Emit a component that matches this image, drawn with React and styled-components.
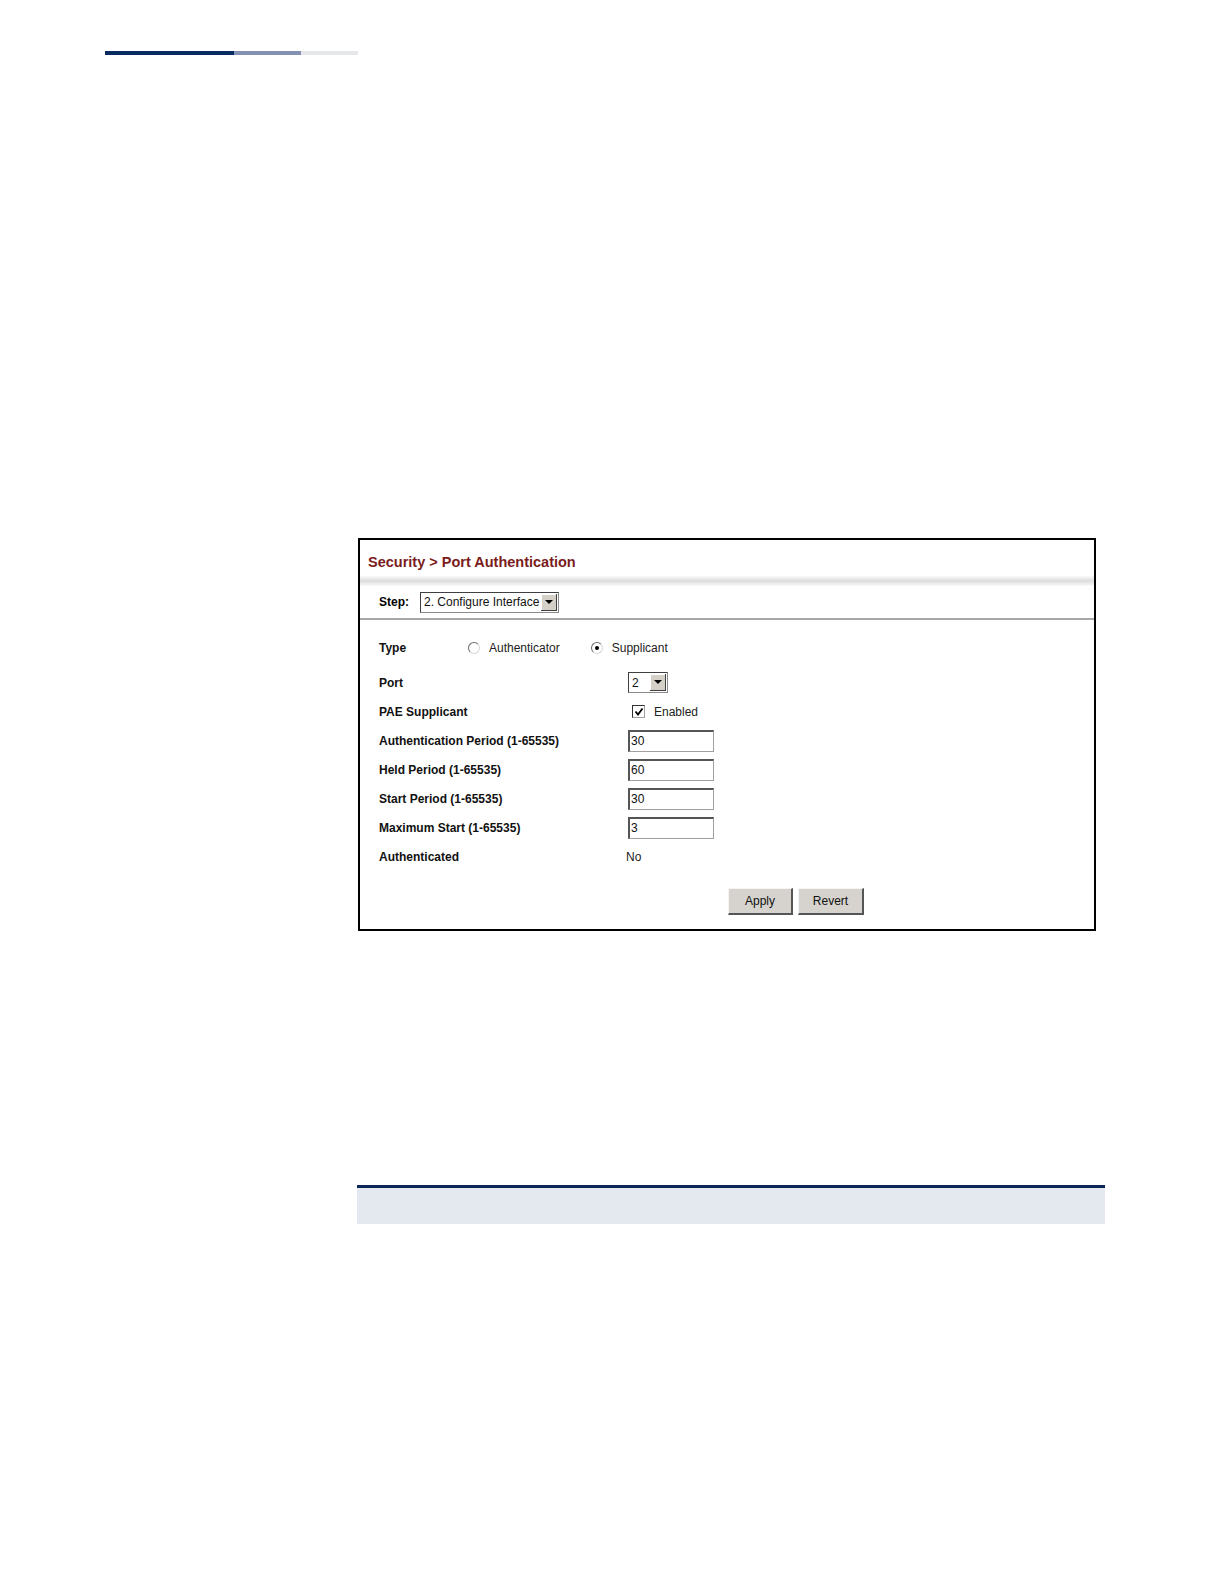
import React from "react";
import styled, { createGlobalStyle } from "styled-components";

const GlobalStyle = createGlobalStyle`
  html, body {
    margin: 0;
    background: #ffffff;
    font-family: "Liberation Sans", Arial, sans-serif;
  }
`;

const Page = styled.div`
  padding-top: 51px;
`;

const HeaderBar = styled.div`
  display: flex;
  margin-left: 105px;
  height: 4px;
`;

const BarSegment = styled.div`
  width: ${props => props.w}px;
  background: ${props => props.color};
`;

const Panel = styled.div`
  margin: 483px 0 0 358px;
  width: 738px;
  height: 393px;
  box-sizing: border-box;
  border: 2px solid #000;
  display: flex;
  flex-direction: column;
`;

const TitleRow = styled.div`
  height: 36px;
  padding: 8px 0 0 8px;
  box-sizing: border-box;
  line-height: 28px;
  color: #7b1c1c;
  font-size: 14.5px;
  font-weight: bold;
`;

const Band = styled.div`
  height: 10px;
  background: linear-gradient(#fbfbfb, #dcdcdc 50%, #fbfbfb);
`;

const StepRow = styled.div`
  height: 34px;
  display: flex;
  align-items: center;
  padding-left: 19px;
  gap: 11px;
  box-sizing: border-box;
  border-bottom: 2px solid #a8a8a8;
  font-size: 12px;
  font-weight: bold;
`;

const Select = styled.div`
  display: flex;
  align-items: stretch;
  height: 21px;
  width: ${props => props.w}px;
  box-sizing: border-box;
  border: 1px solid #8a8a8a;
  border-top-color: #404040;
  border-left-color: #404040;
  background: #fff;
  font-size: 12px;
  font-weight: normal;
  color: #111;
`;

const SelectText = styled.span`
  flex: 1;
  padding-left: 3px;
  display: flex;
  align-items: center;
  white-space: nowrap;
`;

const SelectArrow = styled.span`
  width: 15px;
  margin: 1px;
  background: #d4d0c8;
  border-right: 1px solid #404040;
  border-bottom: 1px solid #404040;
  box-shadow: inset 1px 1px 0 #fff;
  display: flex;
  align-items: center;
  justify-content: center;
  &::after {
    content: "";
    border-left: 4px solid transparent;
    border-right: 4px solid transparent;
    border-top: 4px solid #000;
  }
`;

const Form = styled.div`
  padding: 13px 0 0 19px;
  display: flex;
  flex-direction: column;
`;

const Row = styled.div`
  display: flex;
  align-items: center;
  height: 29px;
  margin-bottom: ${props => props.gap || 0}px;
  font-size: 12px;
`;

const Label = styled.span`
  width: ${props => props.w || 249}px;
  font-weight: bold;
  color: #111;
  flex-shrink: 0;
`;

const Option = styled.label`
  display: flex;
  align-items: center;
  gap: 9px;
  margin-left: ${props => props.ml || 0}px;
  color: #222;
`;

const Radio = styled.span`
  width: 12px;
  height: 12px;
  border-radius: 50%;
  box-sizing: border-box;
  border: 1px solid #6a6a6a;
  border-right-color: #d8d8d8;
  border-bottom-color: #d8d8d8;
  background: #fff;
  display: flex;
  align-items: center;
  justify-content: center;
  &::after {
    content: "";
    width: 4px;
    height: 4px;
    border-radius: 50%;
    background: ${props => (props.checked ? "#000" : "transparent")};
  }
`;

const CheckBox = styled.span`
  width: 13px;
  height: 13px;
  box-sizing: border-box;
  border: 1px solid #303030;
  border-right-color: #a0a0a0;
  border-bottom-color: #a0a0a0;
  margin-left: 4px;
  display: flex;
  align-items: center;
  justify-content: center;
  background: #fff;
`;

const Input = styled.div`
  width: 86px;
  height: 22px;
  box-sizing: border-box;
  border: 1px solid #a0a0a0;
  border-top: 2px solid #555;
  border-left: 2px solid #555;
  padding-left: 1px;
  display: flex;
  align-items: center;
  font-size: 12px;
  color: #111;
`;

const Value = styled.span`
  margin-left: -2px;
  color: #222;
`;

const Buttons = styled.div`
  display: flex;
  gap: 5px;
  padding: 17px 0 0 368px;
`;

const Button = styled.button`
  width: ${props => props.w}px;
  height: 27px;
  background: #d6d3ce;
  border: 1px solid #d6d3ce;
  border-right: 2px solid #555;
  border-bottom: 2px solid #555;
  border-top-color: #f4f4f4;
  border-left-color: #f4f4f4;
  font-family: "Liberation Sans", Arial, sans-serif;
  font-size: 12px;
  color: #111;
  padding: 0;
`;

const FooterTable = styled.div`
  margin: 254px 0 0 357px;
  width: 748px;
  height: 39px;
  box-sizing: border-box;
  border-top: 3px solid #0a2756;
  background: #e4e8ef;
`;

const fields = [
  { label: "Authentication Period (1-65535)", value: "30" },
  { label: "Held Period (1-65535)", value: "60" },
  { label: "Start Period (1-65535)", value: "30" },
  { label: "Maximum Start (1-65535)", value: "3" }
];

const App = () => (
  <>
    <GlobalStyle />
    <Page>
      <HeaderBar>
        <BarSegment w={129} color="#0a2a62" />
        <BarSegment w={67} color="#8392b2" />
        <BarSegment w={57} color="#e6e7ea" />
      </HeaderBar>
      <Panel>
        <TitleRow>Security &gt; Port Authentication</TitleRow>
        <Band />
        <StepRow>
          Step:
          <Select w={139}>
            <SelectText>2. Configure Interface</SelectText>
            <SelectArrow />
          </Select>
        </StepRow>
        <Form>
          <Row gap={6}>
            <Label w={89}>Type</Label>
            <Option>
              <Radio />
              Authenticator
            </Option>
            <Option ml={31}>
              <Radio checked />
              Supplicant
            </Option>
          </Row>
          <Row>
            <Label>Port</Label>
            <Select w={40}>
              <SelectText>2</SelectText>
              <SelectArrow />
            </Select>
          </Row>
          <Row>
            <Label>PAE Supplicant</Label>
            <Option>
              <CheckBox>
                <svg width="10" height="10" viewBox="0 0 10 10">
                  <path d="M1.5 4.5 L4 7.5 L8.5 1.5" fill="none" stroke="#000" strokeWidth="1.8" />
                </svg>
              </CheckBox>
              Enabled
            </Option>
          </Row>
          {fields.map(f => (
            <Row key={f.label}>
              <Label>{f.label}</Label>
              <Input>{f.value}</Input>
            </Row>
          ))}
          <Row>
            <Label>Authenticated</Label>
            <Value>No</Value>
          </Row>
        </Form>
        <Buttons>
          <Button w={65}>Apply</Button>
          <Button w={66}>Revert</Button>
        </Buttons>
      </Panel>
      <FooterTable />
    </Page>
  </>
);

export default App;
